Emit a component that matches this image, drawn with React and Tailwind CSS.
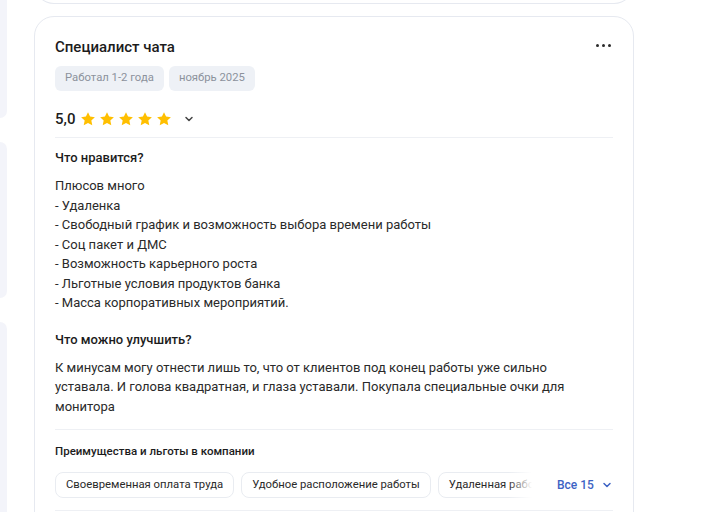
import React from "react";

function Star() {
  return (
    <svg width="16" height="16" viewBox="0 0 24 24" className="block">
      <path
        d="M12 1.8l3.1 6.6 7.2.9-5.3 5 1.4 7.1L12 17.9l-6.4 3.5 1.4-7.1-5.3-5 7.2-.9z"
        fill="#ffbf00"
      />
    </svg>
  );
}

function Chevron({ color = "#555", size = 10 }) {
  return (
    <svg width={size} height={size} viewBox="0 0 10 10" className="block">
      <path d="M2 3.5l3 3 3-3" fill="none" stroke={color} strokeWidth="1.5" strokeLinecap="round" strokeLinejoin="round" />
    </svg>
  );
}

const likes = [
  "Плюсов много",
  "- Удаленка",
  "- Свободный график и возможность выбора времени работы",
  "- Соц пакет и ДМС",
  "- Возможность карьерного роста",
  "- Льготные условия продуктов банка",
  "- Масса корпоративных мероприятий.",
];

const chips = ["Своевременная оплата труда", "Удобное расположение работы", "Удаленная работа"];

export default function App() {
  return (
    <div
      className="relative w-[709px] h-[512px] overflow-hidden bg-white text-[#222]"
      style={{ fontFamily: "Roboto, 'Noto Sans', sans-serif" }}
    >
      {/* left side panels */}
      <div className="absolute left-0 top-0 flex flex-col gap-[24px]">
        <div className="w-[7px] h-[118px] bg-[#f3f4fa] rounded-br-[10px]" />
        <div className="w-[7px] h-[156px] bg-[#f3f4fa] rounded-r-[10px]" />
        <div className="w-[7px] h-[200px] bg-[#f3f4fa] rounded-tr-[10px]" />
      </div>

      <div className="pl-[34px] w-[634px]">
        {/* previous card bottom */}
        <div className="h-[3px] -mt-[20px] pt-[20px] box-content border border-t-0 border-[#e6e9f0] rounded-b-[20px]" />

        {/* card */}
        <div className="mt-[12px] border border-[#e6e9f0] rounded-[20px] px-[20px] pt-[20px] pb-[40px]">
          <div className="flex items-center justify-between h-[20px]">
            <div className="text-[15px] leading-[20px] font-medium text-[#1c1c1c]">Специалист чата</div>
            <div className="flex gap-[3px] mr-[2px] -mt-[4px]">
              <span className="w-[3px] h-[3px] rounded-full bg-[#2b2b2b]" />
              <span className="w-[3px] h-[3px] rounded-full bg-[#2b2b2b]" />
              <span className="w-[3px] h-[3px] rounded-full bg-[#2b2b2b]" />
            </div>
          </div>

          <div className="mt-[9px] flex gap-[5px]">
            <span className="h-[25px] px-[10px] flex items-center rounded-[6px] bg-[#eef1f6] text-[11.3px] text-[#8c929c]">Работал 1-2 года</span>
            <span className="h-[25px] px-[10px] flex items-center rounded-[6px] bg-[#eef1f6] text-[11.3px] text-[#8c929c]">ноябрь 2025</span>
          </div>

          <div className="mt-[16px] h-[24px] flex items-center">
            <span className="text-[15px] font-medium text-[#1c1c1c] mr-[5px]">5,0</span>
            <div className="flex gap-[3px]">
              <Star />
              <Star />
              <Star />
              <Star />
              <Star />
            </div>
            <span className="ml-[12px]"><Chevron color="#444" /></span>
          </div>

          <div className="mt-[6px] h-px bg-[#eef0f4]" />

          <div className="mt-[10px] text-[13px] leading-[20px] font-medium text-[#1c1c1c]">Что нравится?</div>
          <div className="mt-[8px] text-[13px] leading-[19.5px] text-[#2a2a2a]">
            {likes.map((l) => (
              <div key={l}>{l}</div>
            ))}
          </div>

          <div className="mt-[17px] text-[13px] leading-[20px] font-medium text-[#1c1c1c]">Что можно улучшить?</div>
          <div className="mt-[8px] text-[13px] leading-[19.5px] text-[#2a2a2a]">
            К минусам могу отнести лишь то, что от клиентов под конец работы уже сильно
            <br />
            уставала. И голова квадратная, и глаза уставали. Покупала специальные очки для
            <br />
            монитора
          </div>

          <div className="mt-[13px] h-px bg-[#eef0f4]" />

          <div className="mt-[13px] text-[11.5px] leading-[16px] font-medium text-[#1c1c1c]">Преимущества и льготы в компании</div>

          <div className="mt-[13px] flex items-center">
            <div className="relative w-[477px] overflow-hidden">
              <div className="flex gap-[7px] whitespace-nowrap">
                {chips.map((c) => (
                  <span key={c} className="h-[26px] px-[10px] flex items-center rounded-[8px] border border-[#e9ecf1] text-[11.3px] text-[#2a2a2a]">
                    {c}
                  </span>
                ))}
              </div>
              <div className="absolute right-0 top-0 h-full w-[24px] bg-gradient-to-r from-transparent to-white" />
            </div>
            <div className="ml-[25px] flex items-center gap-[8px] text-[12px] font-medium text-[#3d63c4]">
              Все 15
              <Chevron color="#3d63c4" />
            </div>
          </div>

          <div className="mt-[12px] h-px bg-[#eef0f4]" />
        </div>
      </div>
    </div>
  );
}
